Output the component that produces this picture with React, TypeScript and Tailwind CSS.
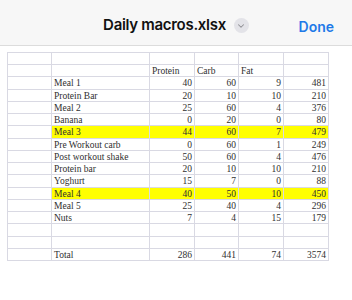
import { ChevronDown } from 'lucide-react';

type Row = { name?: string; vals?: (number | string)[]; hi?: boolean; head?: boolean };

const rows: Row[] = [
  {},
  { head: true },
  { name: 'Meal 1', vals: [40, 60, 9, 481] },
  { name: 'Protein Bar', vals: [20, 10, 10, 210] },
  { name: 'Meal 2', vals: [25, 60, 4, 376] },
  { name: 'Banana', vals: [0, 20, 0, 80] },
  { name: 'Meal 3', vals: [44, 60, 7, 479], hi: true },
  { name: 'Pre Workout carb', vals: [0, 60, 1, 249] },
  { name: 'Post workout shake', vals: [50, 60, 4, 476] },
  { name: 'Protein bar', vals: [20, 10, 10, 210] },
  { name: 'Yoghurt', vals: [15, 7, 0, 88] },
  { name: 'Meal 4', vals: [40, 50, 10, 450], hi: true },
  { name: 'Meal 5', vals: [25, 40, 4, 296] },
  { name: 'Nuts', vals: [7, 4, 15, 179] },
  {},
  {},
  { name: 'Total', vals: [286, 441, 74, 3574] },
];

const cell = 'h-[12.24px] border-r border-b border-[#d9d9e3] px-[2px] leading-[11px] pt-[1px] overflow-hidden whitespace-nowrap';

export default function App() {
  return (
    <div className="w-[352px] h-[300px] bg-white overflow-hidden">
      {/* nav bar */}
      <div className="h-[46px] bg-[#f7f7f7] border-b border-[#dcdcdc] flex items-center relative pt-[6px]">
        <div className="flex-1 flex items-center justify-center gap-[8px]">
          <span className="text-[15px] font-semibold text-[#111] tracking-[-0.3px]" style={{ fontFamily: 'Inter, sans-serif' }}>
            Daily macros.xlsx
          </span>
          <span className="w-[15px] h-[15px] rounded-full bg-[#e3e3e8] flex items-center justify-center">
            <ChevronDown size={10} strokeWidth={2.5} className="text-[#8e8e93]" />
          </span>
        </div>
        <span
          className="absolute right-[18px] top-[18px] text-[14px] leading-[18px] font-semibold text-[#1f7ae8]"
          style={{ fontFamily: 'Inter, sans-serif' }}
        >
          Done
        </span>
      </div>

      {/* sheet */}
      <div className="mt-[6px] ml-[7px] w-[322px] border-l border-t border-[#d9d9e3] text-[9.5px] text-[#2f2f2f]" style={{ fontFamily: '"Liberation Serif", serif' }}>
        {rows.map((r, i) => (
          <div key={i} className="grid grid-cols-[44px_98px_45px_44px_45px_45px]">
            <div className={cell} />
            <div className={`${cell} ${r.hi ? 'bg-[#ffff00]' : ''}`}>{r.name}</div>
            {r.head
              ? ['Protein', 'Carb', 'Fat', ''].map((h, j) => (
                  <div key={j} className={cell}>{h}</div>
                ))
              : [0, 1, 2, 3].map((j) => (
                  <div key={j} className={`${cell} text-right ${r.hi ? 'bg-[#ffff00]' : ''}`}>
                    {r.vals ? r.vals[j] : ''}
                  </div>
                ))}
          </div>
        ))}
      </div>
    </div>
  );
}
